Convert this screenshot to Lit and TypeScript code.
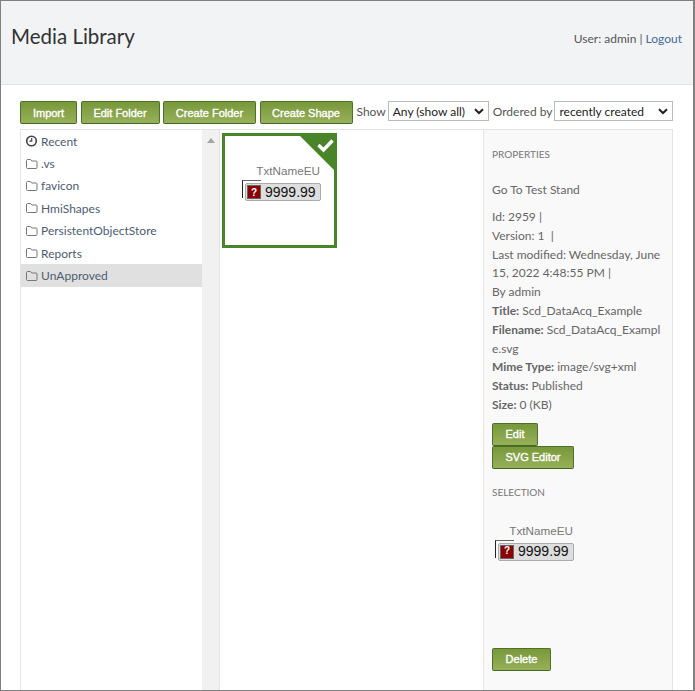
import { LitElement, html, css, svg } from 'lit';
import { customElement } from 'lit/decorators.js';

const folderIcon = svg`<path d="M1.5 3.5 C1.5 2.9 1.9 2.5 2.5 2.5 L5.6 2.5 L6.8 4 L11 4 C11.6 4 12 4.4 12 5 L12 10.5 C12 11.1 11.6 11.5 11 11.5 L2.5 11.5 C1.9 11.5 1.5 11.1 1.5 10.5 Z" fill="none" stroke="#777" stroke-width="1"/>`;
const clockIcon = svg`<circle cx="6.5" cy="7" r="4.8" fill="none" stroke="#444" stroke-width="1.6"/><path d="M6.7 4 V7.2 H4.4" fill="none" stroke="#444" stroke-width="1.2"/>`;

const folders = ['.vs', 'favicon', 'HmiShapes', 'PersistentObjectStore', 'Reports', 'UnApproved'];

@customElement('app-root')
export class AppRoot extends LitElement {
  static styles = css`
    :host {
      display: block;
      width: 695px;
      height: 691px;
      box-sizing: border-box;
      border: 1px solid #808080;
      border-right-width: 2px;
      overflow: hidden;
      background: #fff;
      font-family: Lato, Roboto, sans-serif;
      font-size: 12px;
      color: #666;
    }

    /* page header */
    .header {
      height: 84px;
      box-sizing: border-box;
      background: #f1f3f5;
      border-bottom: 1px solid #e4e4e4;
      display: flex;
      justify-content: space-between;
      align-items: center;
      padding: 0 11px 13px 10px;
    }
    .title {
      font-size: 20.5px;
      color: #333;
      margin: 0;
      font-weight: 400;
    }
    .user {
      color: #555;
      margin-top: 4px;
    }
    .user a {
      color: #4a6a94;
    }

    /* toolbar */
    .toolbar {
      display: flex;
      align-items: flex-start;
      margin: 16px 20px 0 19px;
      height: 23px;
      white-space: nowrap;
    }
    .btn {
      height: 23px;
      box-sizing: border-box;
      border: 1px solid #4c7228;
      border-bottom-color: #446622;
      border-radius: 2px;
      background: linear-gradient(#78983a, #97b05a);
      color: #fff;
      font-family: 'Liberation Sans', Arial, sans-serif;
      font-size: 11px;
      -webkit-text-stroke: 0.35px #fff;
      display: flex;
      align-items: center;
      justify-content: center;
    }
    .toolbar .btn {
      margin-right: 3.5px;
      flex: none;
    }
    .label {
      margin: 0 2px 0 0;
      color: #555;
      line-height: 22px;
    }
    .select {
      height: 20px;
      box-sizing: border-box;
      border: 1px solid #bbb;
      display: flex;
      align-items: center;
      justify-content: space-between;
      padding: 1px 4px 0;
      color: #222;
      margin-right: 4px;
      flex: none;
    }
    .select svg {
      flex: none;
    }

    /* three columns */
    .columns {
      display: flex;
      margin: 5px 20px 0 19px;
      height: 560px;
      border-top: 1px solid #e4e4e4;
    }
    .folders {
      width: 181px;
      border-left: 1px solid #e4e4e4;
    }
    .folder {
      height: 22.4px;
      display: flex;
      align-items: center;
      gap: 3px;
      padding-left: 4px;
      color: #4d5d70;
    }
    .folder svg {
      flex: none;
    }
    .folder.selected {
      background: #e0e0e0;
    }
    .track {
      width: 18px;
      background: #f1f1f1;
      display: flex;
      justify-content: center;
      padding-top: 8px;
      box-sizing: border-box;
      border-right: 1px solid #e4e4e4;
    }
    .arrow {
      width: 0;
      height: 0;
      border-left: 4px solid transparent;
      border-right: 4px solid transparent;
      border-bottom: 5px solid #a5a5a5;
    }
    .media {
      flex: 1;
      padding: 3px 0 0 2px;
    }
    .tile {
      width: 115px;
      height: 115px;
      box-sizing: border-box;
      border: 3px solid #4a8428;
      position: relative;
      padding: 28px 0 0 17px;
    }
    .corner {
      position: absolute;
      top: -3px;
      right: -3px;
    }

    /* widget preview */
    .widget {
      width: 79px;
      font-family: 'Liberation Sans', Arial, sans-serif;
    }
    .widget-name {
      text-align: right;
      font-size: 11.7px;
      color: #777;
      height: 14px;
      line-height: 14px;
      margin-bottom: 5px;
      padding-right: 1px;
    }
    .widget-box {
      position: relative;
      height: 18px;
      margin-left: 3px;
      width: 76px;
      box-sizing: border-box;
      background: #dedede;
      border: 1px solid #aaa;
      border-radius: 2px;
      display: flex;
      align-items: center;
      color: #111;
      font-size: 14px;
      padding-left: 1px;
      gap: 4px;
    }
    .widget-box::before {
      content: '';
      position: absolute;
      left: -4px;
      top: -4px;
      width: 18px;
      height: 17px;
      border-left: 1px solid #222;
      border-top: 1px solid #666;
    }
    .question {
      width: 14px;
      height: 14px;
      box-sizing: border-box;
      background: #8b0000;
      border: 1px solid #666;
      color: #fff;
      font-size: 10px;
      font-weight: 700;
      display: flex;
      align-items: center;
      justify-content: center;
    }

    /* properties panel */
    .props {
      width: 190px;
      box-sizing: border-box;
      background: #f9f9f9;
      border-left: 1px solid #e4e4e4;
      border-right: 1px solid #e4e4e4;
      padding: 16px 9px 0 8px;
      line-height: 18.8px;
    }
    .props h4 {
      font-size: 10px;
      font-weight: 400;
      color: #777;
      margin: 0;
      line-height: 16px;
      text-transform: uppercase;
    }
    .name {
      color: #666;
      margin: 19px 0 9px;
      line-height: 18px;
    }
    .props b {
      font-weight: 700;
    }
    .prop-actions {
      margin-top: 8px;
    }
    .selection {
      margin-top: 15px;
    }
    .preview {
      margin: 24px 0 0 3px;
    }
    .delete {
      margin-top: 87px;
    }
  `;

  private renderWidget() {
    return html`<div class="widget">
      <div class="widget-name">TxtNameEU</div>
      <div class="widget-box"><span class="question">?</span>9999.99</div>
    </div>`;
  }

  private chevron() {
    return html`<svg width="10" height="7" viewBox="0 0 10 7"><path d="M1 1.2 L5 5 L9 1.2" fill="none" stroke="#222" stroke-width="2"/></svg>`;
  }

  render() {
    return html`
      <div class="header">
        <h1 class="title">Media Library</h1>
        <div class="user">User: admin | <a>Logout</a></div>
      </div>
      <div class="toolbar">
        <div class="btn" style="width:57px">Import</div>
        <div class="btn" style="width:79px">Edit Folder</div>
        <div class="btn" style="width:93px">Create Folder</div>
        <div class="btn" style="width:93px;margin-right:4px">Create Shape</div>
        <span class="label">Show</span>
        <div class="select" style="width:101px">Any (show all)${this.chevron()}</div>
        <span class="label">Ordered by</span>
        <div class="select" style="width:119px;margin-right:0">recently created${this.chevron()}</div>
      </div>
      <div class="columns">
        <div class="folders">
          <div class="folder">
            <svg width="13" height="14" viewBox="0 0 13 14">${clockIcon}</svg>
            Recent
          </div>
          ${folders.map(
            (f) => html`<div class="folder ${f === 'UnApproved' ? 'selected' : ''}">
              <svg width="13" height="14" viewBox="0 0 13 14">${folderIcon}</svg>
              ${f}
            </div>`
          )}
        </div>
        <div class="track"><div class="arrow"></div></div>
        <div class="media">
          <div class="tile">
            <svg class="corner" width="40" height="40" viewBox="0 0 40 40">
              <path d="M0 0 H40 V40 Z" fill="#4a8428" />
              <path d="M21.5 12 L26.5 17 L35.5 7.5" fill="none" stroke="#fff" stroke-width="3.4" />
            </svg>
            ${this.renderWidget()}
          </div>
        </div>
        <div class="props">
          <h4>Properties</h4>
          <div class="name">Go To Test Stand</div>
          <div>
            Id: 2959 |<br />
            Version: 1 &nbsp;|<br />
            Last modified: Wednesday, June 15, 2022 4:48:55 PM |<br />
            By admin<br />
            <b>Title:</b> Scd_DataAcq_Example<br />
            <b>Filename:</b> Scd_DataAcq_Exampl<br />e.svg<br />
            <b>Mime Type:</b> image/svg+xml<br />
            <b>Status:</b> Published<br />
            <b>Size:</b> 0 (KB)
          </div>
          <div class="prop-actions">
            <div class="btn" style="width:46px">Edit</div>
            <div class="btn" style="width:82px">SVG Editor</div>
          </div>
          <div class="selection">
            <h4>Selection</h4>
            <div class="preview">${this.renderWidget()}</div>
          </div>
          <div class="btn delete" style="width:59px">Delete</div>
        </div>
      </div>
    `;
  }
}
